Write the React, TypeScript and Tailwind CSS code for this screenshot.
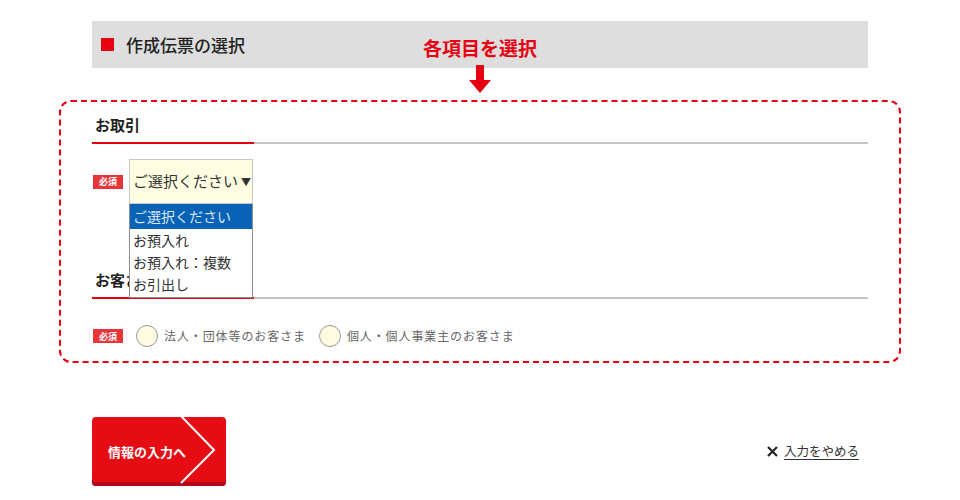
import React from "react";

const font = { fontFamily: '"Noto Sans CJK JP", "Noto Sans", sans-serif' };

function Badge() {
  return (
    <span className="inline-flex h-[14px] w-[30px] shrink-0 items-center justify-center bg-[#e8353a] text-[9px] font-bold leading-none text-white">
      必須
    </span>
  );
}

function SectionHeading({ children }: { children: React.ReactNode }) {
  return (
    <div className="border-b-2 border-[#c4c4c4]">
      <div className="-mb-[2px] w-[162px] border-b-2 border-[#e60012] pb-[6px] pl-[3px] text-[15px] font-bold leading-[22px] text-[#222]">
        {children}
      </div>
    </div>
  );
}

function Radio({ label }: { label: string }) {
  return (
    <label className="flex items-center gap-[6px]">
      <span className="h-[22px] w-[22px] rounded-full border border-[#9a9a9a] bg-[#fffbe0]" />
      <span className="text-[12px] leading-none tracking-[0.9px] text-[#666]">{label}</span>
    </label>
  );
}

const options = ["ご選択ください", "お預入れ", "お預入れ：複数", "お引出し"];

export default function App() {
  return (
    <div className="min-h-[500px] w-[960px] bg-white pt-[21px]" style={font}>
      <div className="relative mx-[92px] flex h-[47px] items-center bg-[#dedede] pl-[9px]">
        <span className="h-[13px] w-[13px] bg-[#e60012]" />
        <span className="ml-[12px] text-[17px] font-medium text-[#222]">作成伝票の選択</span>
        <div className="absolute left-[331px] top-[16px] flex flex-col items-center">
          <span className="text-[19px] font-bold leading-[22px] text-[#e60012]">各項目を選択</span>
          <svg width="22" height="28" viewBox="0 0 22 28" className="mt-[6px]">
            <rect x="7" y="0" width="8" height="16" fill="#e60012" />
            <polygon points="0,15 22,15 11,28" fill="#e60012" />
          </svg>
        </div>
      </div>

      <div className="mx-[59px] mt-[32px] rounded-[12px] border-2 border-dashed border-[#e60012] px-[31px] pb-[14px] pt-[12px]">
        <SectionHeading>お取引</SectionHeading>
        <div className="mt-[15px] flex items-center gap-[6px] pl-[1px]">
          <Badge />
          <div className="relative">
            <div className="flex h-[45px] w-[124px] items-center overflow-hidden whitespace-nowrap border border-[#c8c8c8] bg-[#fffde2] pl-[3px] text-[15px] text-[#333]">
              ご選択ください
              <span className="ml-[3px] text-[10px]">▼</span>
            </div>
            <ul className="absolute left-0 top-[45px] z-10 w-[124px] border border-t-0 border-[#8f8f8f] bg-white pb-[2px] text-[14px] text-[#333]">
              {options.map((o, i) => (
                <li
                  key={o}
                  className={
                    i === 0
                      ? "flex h-[25px] items-center bg-[#0862b5] pl-[3px] text-[#dbe8f5]"
                      : "flex h-[22px] items-center pl-[3px]"
                  }
                >
                  {o}
                </li>
              ))}
            </ul>
          </div>
        </div>

        <div className="mt-[65px]">
          <SectionHeading>お客さま区分</SectionHeading>
        </div>
        <div className="mt-[26px] flex items-center gap-[13px] pl-[1px]">
          <Badge />
          <Radio label="法人・団体等のお客さま" />
          <Radio label="個人・個人事業主のお客さま" />
        </div>
      </div>

      <div className="mx-[92px] mt-[54px] flex items-center justify-between">
        <button className="relative flex h-[69px] w-[134px] items-center overflow-hidden rounded-[4px] bg-[#e60c14] pl-[16px] text-left text-[13px] font-bold text-white shadow-[inset_0_-4px_0_#b3081c]">
          情報の入力へ
          <svg width="40" height="69" viewBox="0 0 40 69" className="absolute right-[6px] top-0">
            <polyline points="1,-1 34,33 1,66" fill="none" stroke="#fff" strokeWidth="2" />
          </svg>
        </button>
        <a className="mr-[9px] flex items-center gap-[6px] text-[12.5px] text-[#333]">
          <svg width="11" height="11" viewBox="0 0 11 11">
            <path d="M1 1 L10 10 M10 1 L1 10" stroke="#222" strokeWidth="2.2" />
          </svg>
          <span className="underline underline-offset-[3px]">入力をやめる</span>
        </a>
      </div>
    </div>
  );
}
